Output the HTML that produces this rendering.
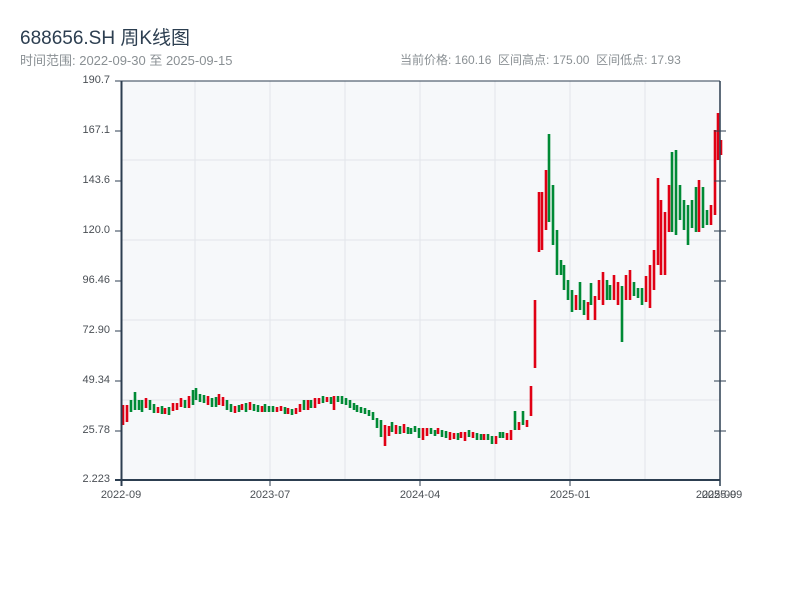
<!DOCTYPE html>
<html><head><meta charset="utf-8"><style>
body{margin:0;width:800px;height:600px;background:#fff;font-family:"Liberation Sans","Noto Sans CJK SC",sans-serif;overflow:hidden;position:relative}
.t{position:absolute;left:20px;top:23px;font-size:19px;color:#2c3e50}
.s{position:absolute;top:51px;font-size:12px;color:#8a9094}
.yl{position:absolute;right:690px;font-size:11px;color:#4a4f55;text-align:right}
.xl{position:absolute;top:489px;font-size:11px;color:#4a4f55;transform:translateX(-50%)}
</style></head><body>
<div class="t">688656.SH 周K线图</div>
<div class="s" style="left:20px;font-size:13px;top:50px">时间范围: 2022-09-30 至 2025-09-15</div>
<div class="s" style="left:400px">当前价格: 160.16&nbsp;&nbsp;区间高点: 175.00&nbsp;&nbsp;区间低点: 17.93</div>
<div class="yl" style="top:74px">190.7</div>
<div class="yl" style="top:124px">167.1</div>
<div class="yl" style="top:174px">143.6</div>
<div class="yl" style="top:224px">120.0</div>
<div class="yl" style="top:274px">96.46</div>
<div class="yl" style="top:324px">72.90</div>
<div class="yl" style="top:374px">49.34</div>
<div class="yl" style="top:424px">25.78</div>
<div class="yl" style="top:473px">2.223</div>
<div class="xl" style="left:121px">2022-09</div>
<div class="xl" style="left:270px">2023-07</div>
<div class="xl" style="left:420px">2024-04</div>
<div class="xl" style="left:570px">2025-01</div>
<div class="xl" style="left:716px">2025-09</div>
<div class="xl" style="left:722px">2025-09</div>
<svg width="800" height="600" style="position:absolute;left:0;top:0">
<rect x="121" y="81" width="599" height="399" fill="#f6f8fa"/>
<g stroke="#e2e5ea" stroke-width="1">
<line x1="195" y1="81" x2="195" y2="480"/><line x1="270" y1="81" x2="270" y2="480"/><line x1="345" y1="81" x2="345" y2="480"/><line x1="420" y1="81" x2="420" y2="480"/><line x1="495" y1="81" x2="495" y2="480"/><line x1="570" y1="81" x2="570" y2="480"/><line x1="645" y1="81" x2="645" y2="480"/>
<line x1="121" y1="160" x2="720" y2="160"/><line x1="121" y1="240" x2="720" y2="240"/><line x1="121" y1="320" x2="720" y2="320"/><line x1="121" y1="400" x2="720" y2="400"/>
</g>
<path fill="none" stroke="#008a35" stroke-width="2.6" d="M131 400V412M135 392V410M139 400V410M142 400V412M150 400V410M154 404V413M162 406V414M169 407V415M185 400V408M193 390V405M196 388V400M200 394V402M204 395V403M212 398V407M216 397V407M227 400V410M231 404V412M239 405V412M246 403V412M254 404V411M258 405V412M265 404V412M269 406V412M273 406V412M285 407V414M292 409V415M304 400V410M311 400V408M323 396V403M331 397V404M338 396V402M342 396V404M346 398V405M350 400V408M354 403V410M357 405V412M361 407V413M365 408V414M369 410V416M373 412V420M377 418V428M381 420V437M392 422V432M400 426V434M408 427V434M411 428V434M415 426V432M419 428V438M431 428V434M435 430V436M442 430V437M446 431V438M458 433V440M469 430V437M477 433V440M481 434V440M488 434V440M492 436V444M500 432V438M503 432V438M515 411V430M523 411V425M549 134V222M553 185V245M557 230V275M561 260V275M564 265V290M568 280V300M572 290V312M580 282V310M584 300V315M591 283V305M607 280V300M610 285V300M622 286V342M634 282V296M638 288V298M642 288V305M672 152V232M676 150V235M680 185V220M684 200V230M688 205V245M692 200V228M696 187V232M703 187V228M707 210V225"/>
<path fill="none" stroke="#e00014" stroke-width="2.6" d="M123 405V425M127 405V422M146 398V408M158 407V413M165 408V414M173 403V411M177 403V410M181 398V407M189 396V408M208 396V405M219 394V405M223 397V406M235 406V413M242 404V410M250 402V410M262 406V412M277 407V412M281 406V411M288 408V414M296 408V414M300 404V412M308 400V410M315 398V408M319 398V404M327 397V402M334 396V410M385 425V446M389 426V436M396 425V434M404 424V433M423 428V440M427 428V436M438 428V434M450 432V440M454 433V439M461 432V438M465 432V441M473 432V438M484 434V440M496 436V444M507 433V440M511 430V440M519 422V430M527 420V427M531 386V416M535 300V368M539 192V252M542 192V250M546 170V230M576 295V310M588 302V320M595 296V320M599 280V300M603 272V305M614 275V300M618 282V305M626 275V300M630 270V300M646 276V302M650 265V308M654 250V290M658 178V265M661 200V275M665 212V275M669 185V232M699 180V232M711 205V225M715 130V215M718 113V160M721 140V155"/>
<g stroke="#2c3e50">
<line x1="115" y1="81" x2="720" y2="81" stroke-width="1"/>
<line x1="121.5" y1="81" x2="121.5" y2="486" stroke-width="2"/>
<line x1="115" y1="480" x2="720" y2="480" stroke-width="2"/>
<line x1="720" y1="81" x2="720" y2="486" stroke-width="1.5"/>
<line x1="115" y1="131" x2="121" y2="131"/><line x1="115" y1="181" x2="121" y2="181"/><line x1="115" y1="231" x2="121" y2="231"/><line x1="115" y1="281" x2="121" y2="281"/><line x1="115" y1="331" x2="121" y2="331"/><line x1="115" y1="381" x2="121" y2="381"/><line x1="115" y1="431" x2="121" y2="431"/>
<line x1="714" y1="131" x2="726" y2="131"/><line x1="714" y1="181" x2="726" y2="181"/><line x1="714" y1="231" x2="726" y2="231"/><line x1="714" y1="281" x2="726" y2="281"/><line x1="714" y1="331" x2="726" y2="331"/><line x1="714" y1="381" x2="726" y2="381"/><line x1="714" y1="431" x2="726" y2="431"/>
<line x1="270" y1="480" x2="270" y2="486"/><line x1="420" y1="480" x2="420" y2="486"/><line x1="570" y1="480" x2="570" y2="486"/>
</g>
</svg>
</body></html>
